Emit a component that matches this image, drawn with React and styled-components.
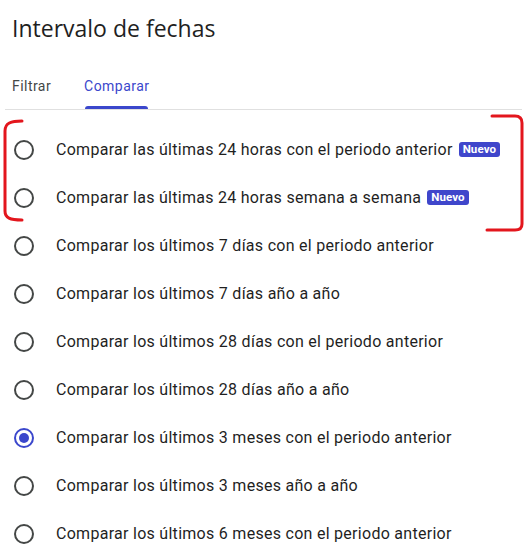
import React from "react"
import styled, { createGlobalStyle } from "styled-components"

const options = [
  { label: "Comparar las últimas 24 horas con el periodo anterior", isNew: true },
  { label: "Comparar las últimas 24 horas semana a semana", isNew: true },
  { label: "Comparar los últimos 7 días con el periodo anterior" },
  { label: "Comparar los últimos 7 días año a año" },
  { label: "Comparar los últimos 28 días con el periodo anterior" },
  { label: "Comparar los últimos 28 días año a año" },
  { label: "Comparar los últimos 3 meses con el periodo anterior", checked: true },
  { label: "Comparar los últimos 3 meses año a año" },
  { label: "Comparar los últimos 6 meses con el periodo anterior" },
]

const App = () => {
  return (
    <>
      <GlobalStyle />
      <Page>
        <Title>Intervalo de fechas</Title>
        <TabBar>
          <Tab>Filtrar</Tab>
          <Tab active>Comparar</Tab>
        </TabBar>
        <List>
          {options.map((o) => (
            <Row key={o.label}>
              <Radio checked={o.checked} />
              <Label>{o.label}</Label>
              {o.isNew && <Badge>Nuevo</Badge>}
            </Row>
          ))}
        </List>
        <Marks width="527" height="555" viewBox="0 0 527 555">
          <path d="M 22 121 C 11 121 5 123 5 131 L 5 211 C 5 218 10 220 22 220" />
          <path d="M 492 116 L 515 116 Q 522 116 522 123 L 522 224 Q 522 230 515 230 L 487 230" />
        </Marks>
      </Page>
    </>
  )
}

export default App

const GlobalStyle = createGlobalStyle`
  body {
    margin: 0;
    background: #ffffff;
    font-family: Roboto, "Noto Sans", sans-serif;
  }
`

const Page = styled.div`
  position: relative;
  width: 527px;
  height: 555px;
  overflow: hidden;
  padding-left: 5px;
  box-sizing: border-box;
`

const Title = styled.h1`
  margin: 13px 0 0;
  padding-left: 7px;
  font-family: "Open Sans", Roboto, sans-serif;
  font-size: 23px;
  line-height: 30px;
  font-weight: 400;
  color: #1f1f1f;
`

const TabBar = styled.div`
  display: flex;
  gap: 33px;
  width: 517px;
  margin-top: 33px;
  padding-left: 7px;
  box-sizing: border-box;
  border-bottom: 1px solid #e0e0e0;
`

const Tab = styled.div`
  position: relative;
  padding-bottom: 13px;
  font-size: 14px;
  line-height: 20px;
  letter-spacing: 0.45px;
  color: ${(p) => (p.active ? "#3b47cc" : "#444746")};

  &::after {
    content: "";
    display: ${(p) => (p.active ? "block" : "none")};
    position: absolute;
    left: 1px;
    right: 1px;
    bottom: 0;
    height: 3px;
    border-radius: 3px 3px 0 0;
    background: #3b47cc;
  }
`

const List = styled.div`
  display: flex;
  flex-direction: column;
  padding-top: 16px;
`

const Row = styled.div`
  display: flex;
  align-items: center;
  height: 48px;
  padding-left: 9px;
`

const Radio = styled.span`
  width: 20px;
  height: 20px;
  box-sizing: border-box;
  border-radius: 50%;
  border: 2px solid ${(p) => (p.checked ? "#3b47cc" : "#444746")};
  display: flex;
  align-items: center;
  justify-content: center;
  flex-shrink: 0;

  &::after {
    content: "";
    display: ${(p) => (p.checked ? "block" : "none")};
    width: 10px;
    height: 10px;
    border-radius: 50%;
    background: #3b47cc;
  }
`

const Label = styled.span`
  margin-left: 22px;
  font-size: 16px;
  line-height: 20px;
  letter-spacing: 0.28px;
  color: #1f1f1f;
  white-space: nowrap;
`

const Badge = styled.span`
  margin-left: 6px;
  margin-top: -1px;
  padding: 0 4px;
  height: 15px;
  line-height: 15px;
  border-radius: 3px;
  background: #3f46cb;
  color: #ffffff;
  font-size: 11.5px;
  font-weight: 700;
  letter-spacing: 0.1px;
`

const Marks = styled.svg`
  position: absolute;
  left: 0;
  top: 0;
  pointer-events: none;
  fill: none;
  stroke: #e3161d;
  stroke-width: 3;
  stroke-linecap: round;
  stroke-linejoin: round;
`
